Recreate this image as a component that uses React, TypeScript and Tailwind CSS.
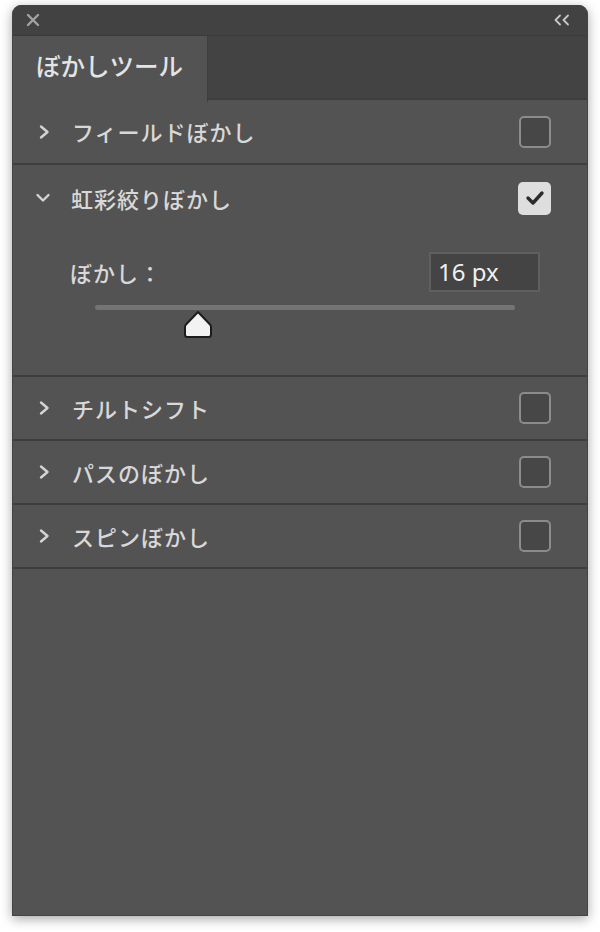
import React from 'react';

const jp = { fontFamily: '"Noto Sans CJK JP", "Noto Sans", sans-serif' };

const ChevronRight = () => (
    <svg width="14" height="16" viewBox="0 0 14 16" className="shrink-0">
        <polyline points="4,2.5 10.5,8 4,13.5" fill="none" stroke="#d4d4d4" strokeWidth="2.4" strokeLinecap="round" strokeLinejoin="round" />
    </svg>
);

const ChevronDown = () => (
    <svg width="16" height="14" viewBox="0 0 16 14" className="shrink-0">
        <polyline points="2.5,4 8,9.5 13.5,4" fill="none" stroke="#d4d4d4" strokeWidth="2.4" strokeLinecap="round" strokeLinejoin="round" />
    </svg>
);

const Checkbox = ({ checked }: { checked?: boolean }) =>
    checked ? (
        <div className="w-[33px] h-[33px] rounded-[5px] bg-[#dedede] flex items-center justify-center">
            <svg width="20" height="16" viewBox="0 0 20 16">
                <polyline points="3,8 8,13 17,3" fill="none" stroke="#2c2c2c" strokeWidth="3.4" strokeLinecap="round" strokeLinejoin="round" />
            </svg>
        </div>
    ) : (
        <div className="w-[32px] h-[32px] rounded-[5px] border-2 border-[#8c8c8c] bg-[#474747]" />
    );

const Row = ({ label, tall }: { label: string; tall?: boolean }) => (
    <div className={`${tall ? 'h-[65px]' : 'h-[64px]'} flex items-center pl-[24px] pr-[36px] border-b-2 border-[#3e3e3e]`}>
        <ChevronRight />
        <span className="ml-[21px] text-[22px] font-medium tracking-[1px] text-[#d8d8d8] flex-1" style={jp}>
            {label}
        </span>
        <Checkbox />
    </div>
);

export default function App() {
    return (
        <div className="w-full h-[932px] bg-white pt-[5px] px-[12px]">
            <div className="h-[911px] flex flex-col rounded-t-[9px] bg-[#535353] border-x border-b border-[#444444] shadow-[0_3px_12px_rgba(0,0,0,0.35)] overflow-hidden">
                {/* Title bar */}
                <div className="h-[31px] bg-[#424242] flex items-center justify-between pl-[13px] pr-[16px] border-b border-[#3a3a3a]">
                    <svg width="14" height="14" viewBox="0 0 14 14">
                        <path d="M2 2 L12 12 M12 2 L2 12" stroke="#a3a3a3" strokeWidth="2.4" strokeLinecap="round" />
                    </svg>
                    <svg width="18" height="12" viewBox="0 0 18 12">
                        <polyline points="7,1.5 2.5,6 7,10.5" fill="none" stroke="#c8c8c8" strokeWidth="1.8" strokeLinecap="round" strokeLinejoin="round" />
                        <polyline points="15,1.5 10.5,6 15,10.5" fill="none" stroke="#c8c8c8" strokeWidth="1.8" strokeLinecap="round" strokeLinejoin="round" />
                    </svg>
                </div>

                {/* Tabs */}
                <div className="h-[64px] flex bg-[#434343] border-b-2 border-[#3e3e3e]">
                    <div className="w-[195px] h-[66px] bg-[#535353] flex items-center pl-[23px] pb-[6px] border-r border-[#3e3e3e]">
                        <span className="text-[24.5px] font-medium text-[#e4e4e4]" style={jp}>
                            ぼかしツール
                        </span>
                    </div>
                </div>

                <Row label="フィールドぼかし" tall />

                {/* Expanded section */}
                <div className="border-b-2 border-[#3e3e3e] pb-[36px]">
                    <div className="h-[66px] flex items-center pl-[22px] pr-[36px]">
                        <ChevronDown />
                        <span className="ml-[20px] text-[22px] font-medium tracking-[1px] text-[#d8d8d8] flex-1" style={jp}>
                            虹彩絞りぼかし
                        </span>
                        <Checkbox checked />
                    </div>
                    <div className="flex items-center justify-between pl-[57px] pr-[47px] mt-[21px]">
                        <span className="text-[22px] font-medium tracking-[1px] text-[#d8d8d8]" style={jp}>
                            ぼかし：
                        </span>
                        <div className="w-[111px] h-[40px] bg-[#444444] border-2 border-[#5f5f5f] flex items-center pl-[7px]">
                            <span className="text-[24px] text-[#f0f0f0]" style={{ fontFamily: '"Noto Sans", sans-serif' }}>
                                16 px
                            </span>
                        </div>
                    </div>
                    <div className="pl-[82px] pr-[72px] mt-[13px]">
                        <div className="h-[5px] rounded-full bg-[#747474]" />
                        <div className="relative h-[29px]">
                            <svg width="30" height="29" viewBox="0 0 30 29" className="absolute left-[88px] top-0">
                                <path
                                    d="M15 2 L27 14.5 Q28 15.5 28 17 L28 24.5 Q28 27 25.5 27 L4.5 27 Q2 27 2 24.5 L2 17 Q2 15.5 3 14.5 Z"
                                    fill="#f2f2f2"
                                    stroke="#1c1c1c"
                                    strokeWidth="2"
                                    strokeLinejoin="round"
                                />
                            </svg>
                        </div>
                    </div>
                </div>

                <Row label="チルトシフト" />
                <Row label="パスのぼかし" />
                <Row label="スピンぼかし" />

                <div className="flex-1" />
            </div>
        </div>
    );
}
